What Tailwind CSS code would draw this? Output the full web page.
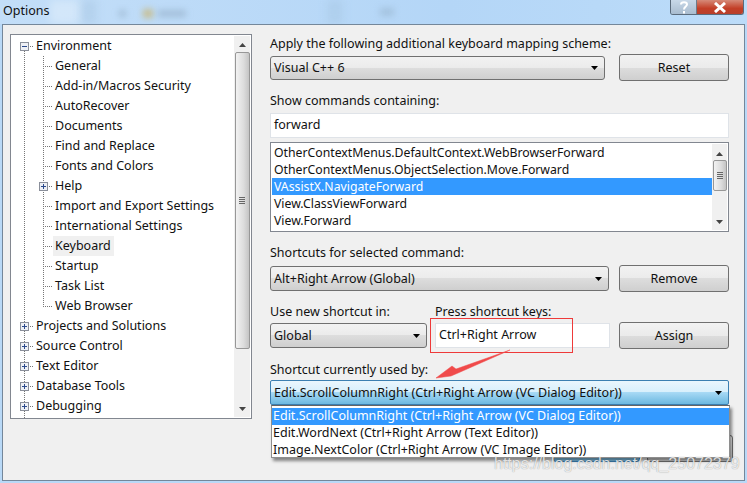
<!DOCTYPE html>
<html lang="en">
<head>
    <meta charset="UTF-8">
    <title>Options</title>
    <script src="https://cdn.jsdelivr.net/npm/@tailwindcss/browser@4"></script>
</head>
<body class="bg-[#b9d9f7]">
<div class="relative w-[747px] h-[483px] overflow-hidden font-['Noto_Sans','Liberation_Sans',sans-serif] text-[12.5px] leading-[17px] text-[#111]">

    <!-- title bar -->
    <div class="relative flex h-6 bg-[linear-gradient(90deg,#c3def8,#b4d6f7_60%,#bcdcf9)]">
        <!-- blurred window behind the glass -->
        <div class="absolute left-[50px] top-0 h-6 w-[30px] bg-white/30 blur-[4px]"></div>
        <div class="absolute left-[82px] top-0 h-6 w-[14px] bg-[#9fc0dc]/40 blur-[4px]"></div>
        <div class="absolute left-[119px] top-[10px] h-[7px] w-[7px] bg-[#8aa4bc]/50 blur-[3px]"></div>
        <div class="absolute left-[143px] top-[9px] h-[9px] w-[10px] bg-[#c9b878]/80 blur-[3px]"></div>
        <div class="absolute left-[158px] top-[10px] h-[7px] w-[28px] bg-[#8aa4bc]/50 blur-[3px]"></div>
        <div class="absolute left-[328px] top-0 h-6 w-[14px] bg-[#9fc0dc]/40 blur-[4px]"></div>
        <div class="absolute left-[380px] top-[8px] h-[8px] w-[14px] bg-[#8aa4bc]/40 blur-[3px]"></div>

        <span class="relative pl-[3px] pt-px leading-[19px]">Options</span>
        <div class="relative ml-auto mr-[3px] flex h-[15px] rounded-b-[3px] border border-t-0 border-[#5b6b7c] overflow-hidden">
            <div class="w-[26px] flex items-center justify-center bg-[linear-gradient(#c8d8e8,#a9bccf)] border-r border-[#6d7b8a]">
                <svg width="10" height="13" viewBox="0 0 10 13" fill="none" stroke="#fff" stroke-width="2"><path d="M2 3.500C2 0.500 8 0.500 8 3.500C8 5.500 5 5.500 5 8.500M5 10v2.500"/></svg>
            </div>
            <div class="w-[46px] flex items-center justify-center bg-[linear-gradient(#d68a78,#c33f27_60%,#b8402c)]">
                <svg width="14" height="11" viewBox="0 0 14 11" fill="none" stroke="#fff" stroke-width="3"><path d="M2 1l10 9M12 1L2 10"/></svg>
            </div>
        </div>
    </div>

    <!-- dialog panel -->
    <div class="absolute left-[2px] top-6 w-[743px] h-[457px] border border-[#74879a] bg-[#f0f0f0] flex">

        <!-- tree -->
        <div class="ml-[7px] mt-[9px] w-[242px] h-[385px] border border-[#828790] bg-white flex">
            <div id="tree" class="relative flex-1 overflow-hidden">
                <div class="absolute left-[13px] top-[15px] h-[368px] border-l border-dotted border-[#777]"></div>
                <div class="absolute left-[32px] top-[21px] h-[251px] border-l border-dotted border-[#777]"></div>
            </div>
            <!-- tree scrollbar -->
            <div class="w-[16px] my-px mr-px flex flex-col items-center bg-[#f0f0f0]">
                <svg class="mt-[7px] shrink-0" width="7" height="4"><path d="M3.500 0L7 4H0z" fill="#444"/></svg>
                <div class="mt-[5px] h-[297px] w-[15px] rounded-[2px] border border-[#979797] bg-[linear-gradient(90deg,#f2f2f2,#dcdcdc_60%,#c4c4c4)] flex flex-col items-center justify-center gap-px">
                    <div class="w-[6px] h-px bg-[#666]"></div>
                    <div class="w-[6px] h-px bg-[#666]"></div>
                    <div class="w-[6px] h-px bg-[#666]"></div>
                    <div class="w-[6px] h-px bg-[#666]"></div>
                </div>
                <svg class="mt-auto mb-[6px] shrink-0" width="7" height="4"><path d="M0 0h7L3.500 4z" fill="#444"/></svg>
            </div>
        </div>

        <!-- right column -->
        <div class="ml-[18px] w-[459px] pt-[10px] flex flex-col">
            <div>Apply the following additional keyboard mapping scheme:</div>

            <div class="mt-[2px] flex h-[27px] items-center justify-between">
                <div class="w-[335px] h-[24px] pl-[3px] pr-[6px] flex items-center justify-between rounded-[3px] border border-[#707070] bg-[linear-gradient(#f2f2f2,#ebebeb_50%,#dddddd_50%,#cfcfcf)]">
                    <span>Visual C++ 6</span>
                    <svg width="7" height="4"><path d="M0 0h7L3.500 4z" fill="#000"/></svg>
                </div>
                <div class="w-[110px] h-[27px] flex items-center justify-center rounded-[3px] border border-[#707070] bg-[linear-gradient(#f2f2f2,#ebebeb_50%,#dddddd_50%,#cfcfcf)]">Reset</div>
            </div>

            <div class="mt-[11px]">Show commands containing:</div>
            <div class="mt-[4px] h-[25px] pl-[3px] pb-[2px] flex items-center border border-[#dfe3e8] bg-white">forward</div>

            <!-- command list -->
            <div class="relative mt-[4px] h-[90px] border border-[#828790] bg-white flex text-[12.25px]">
                <div class="flex-1 pl-px pt-px">
                    <div class="h-[17px] pl-[2px]">OtherContextMenus.DefaultContext.WebBrowserForward</div>
                    <div class="h-[17px] pl-[2px]">OtherContextMenus.ObjectSelection.Move.Forward</div>
                    <div class="h-[17px] pl-[2px] bg-[#3399ff] text-white">VAssistX.NavigateForward</div>
                    <div class="h-[17px] pl-[2px]">View.ClassViewForward</div>
                    <div class="h-[17px] pl-[2px]">View.Forward</div>
                </div>
                <div class="w-[15px] mr-px my-px flex flex-col items-center bg-[#f0f0f0]">
                    <svg class="mt-[8px] shrink-0" width="7" height="4"><path d="M3.500 0L7 4H0z" fill="#444"/></svg>
                    <div class="mt-[4px] h-[31px] w-[14px] rounded-[2px] border border-[#979797] bg-[linear-gradient(90deg,#f2f2f2,#dcdcdc_60%,#c4c4c4)] flex flex-col items-center justify-center gap-px">
                        <div class="w-[6px] h-px bg-[#666]"></div>
                        <div class="w-[6px] h-px bg-[#666]"></div>
                        <div class="w-[6px] h-px bg-[#666]"></div>
                        <div class="w-[6px] h-px bg-[#666]"></div>
                    </div>
                    <svg class="mt-auto mb-[6px] shrink-0" width="7" height="4"><path d="M0 0h7L3.500 4z" fill="#444"/></svg>
                </div>
            </div>

            <div class="mt-[12px]">Shortcuts for selected command:</div>
            <div class="mt-[4px] flex h-[27px] items-center justify-between">
                <div class="w-[339px] h-[25px] pl-[3px] pr-[6px] flex items-center justify-between rounded-[3px] border border-[#707070] bg-[linear-gradient(#f2f2f2,#ebebeb_50%,#dddddd_50%,#cfcfcf)]">
                    <span>Alt+Right Arrow (Global)</span>
                    <svg width="7" height="4"><path d="M0 0h7L3.500 4z" fill="#000"/></svg>
                </div>
                <div class="w-[110px] h-[27px] flex items-center justify-center rounded-[3px] border border-[#707070] bg-[linear-gradient(#f2f2f2,#ebebeb_50%,#dddddd_50%,#cfcfcf)]">Remove</div>
            </div>

            <div class="mt-[11px] flex">
                <span class="w-[165px]">Use new shortcut in:</span>
                <span>Press shortcut keys:</span>
            </div>
            <div class="mt-[2px] flex h-[27px] items-center">
                <div class="w-[157px] h-[25px] pl-[3px] pr-[6px] flex items-center justify-between rounded-[3px] border border-[#707070] bg-[linear-gradient(#f2f2f2,#ebebeb_50%,#dddddd_50%,#cfcfcf)]">
                    <span>Global</span>
                    <svg width="7" height="4"><path d="M0 0h7L3.500 4z" fill="#000"/></svg>
                </div>
                <div class="ml-[8px] w-[175px] h-[25px] pl-[3px] pb-[2px] flex items-center border border-[#dfe3e8] bg-white">Ctrl+Right Arrow</div>
                <div class="ml-auto w-[110px] h-[27px] flex items-center justify-center rounded-[3px] border border-[#707070] bg-[linear-gradient(#f2f2f2,#ebebeb_50%,#dddddd_50%,#cfcfcf)]">Assign</div>
            </div>

            <div class="mt-[12px]">Shortcut currently used by:</div>
            <div class="mt-[2px] h-[25px] pl-[3px] pr-[6px] flex items-center justify-between rounded-[2px] border border-[#3c7fb1] bg-[linear-gradient(#eaf6fd,#d7effc_50%,#a7d9f5_50%,#6cb8e0)]">
                <span>Edit.ScrollColumnRight (Ctrl+Right Arrow (VC Dialog Editor))</span>
                <svg width="7" height="4"><path d="M0 0h7L3.500 4z" fill="#000"/></svg>
            </div>

            <!-- OK / Cancel, mostly hidden by the open dropdown -->
            <div class="mt-[25px] flex justify-end gap-[7px] -mr-[4px]">
                <div class="w-[87px] h-[32px] rounded-[3px] border border-[#3c7fb1] bg-[linear-gradient(#d7effc,#7cc0e6)]"></div>
                <div class="w-[86px] h-[27px] mt-[5px] rounded-[3px] border border-[#707070] bg-[linear-gradient(#f2f2f2,#cfcfcf)]"></div>
            </div>
        </div>
    </div>

    <!-- open dropdown -->
    <div class="absolute left-[271px] top-[405px] w-[459px] h-[53px] border border-[#8e8e8e] border-t-[#646464] bg-white pt-[2px] shadow-[2px_3px_3px_rgba(0,0,0,0.45)]">
        <div class="h-[17px] pl-px leading-[15px] bg-[#3399ff] text-white">Edit.ScrollColumnRight (Ctrl+Right Arrow (VC Dialog Editor))</div>
        <div class="h-[17px] pl-px leading-[15px]">Edit.WordNext (Ctrl+Right Arrow (Text Editor))</div>
        <div class="h-[17px] pl-px leading-[15px]">Image.NextColor (Ctrl+Right Arrow (VC Image Editor))</div>
    </div>

    <!-- annotation: red box and arrow -->
    <div class="absolute left-[430px] top-[318px] w-[143px] h-[35px] border border-[#ee3a3a]"></div>
    <svg class="absolute left-[430px] top-[345px]" width="90" height="40" viewBox="0 0 90 40">
        <path d="M80 5L26 24L22 21L6 33L21 31L28 28z" fill="#f04a4a" stroke="#f04a4a" stroke-width="0.5" stroke-linejoin="round"/>
    </svg>

    <!-- watermark -->
    <div class="absolute left-[494px] top-[453px] text-[16px] leading-[22px] text-white/80 [text-shadow:0_0_1px_rgba(0,0,0,0.45)] font-['Liberation_Sans',sans-serif]">https://blog.csdn.net/qq_25072379</div>
</div>

<script>
    const tree = document.getElementById('tree');
    // [label, indent level, expander, selected]
    const items = [
        ['Environment', 0, 'minus'],
        ['General', 1], ['Add-in/Macros Security', 1], ['AutoRecover', 1], ['Documents', 1],
        ['Find and Replace', 1], ['Fonts and Colors', 1], ['Help', 1, 'plus'],
        ['Import and Export Settings', 1], ['International Settings', 1], ['Keyboard', 1, null, true],
        ['Startup', 1], ['Task List', 1], ['Web Browser', 1],
        ['Projects and Solutions', 0, 'plus'], ['Source Control', 0, 'plus'], ['Text Editor', 0, 'plus'],
        ['Database Tools', 0, 'plus'], ['Debugging', 0, 'plus'],
    ];

    for (const [label, level, box, active] of items) {
        const row = tree.appendChild(document.createElement('div'));
        row.className = 'relative h-5';
        const x = level ? 32 : 13;
        let html = `<div class="absolute top-[11px] w-[9px] border-t border-dotted border-[#777]" style="left:${x}px"></div>`;
        if (box) {
            const bar = box === 'plus' ? '<path d="M2 4.500h5M4.500 2v5" stroke="#2b4a8c"/>' : '<path d="M2 4.500h5" stroke="#2b4a8c"/>';
            html += `<svg class="absolute top-[7px]" style="left:${x - 4}px" width="9" height="9"><rect x=".5" y=".5" width="8" height="8" fill="#eef0f5" stroke="#8a8f9a"/>${bar}</svg>`;
        }
        const cls = active ? 'bg-[#f0f0f0] w-[61px] pl-[2px]' : level ? 'pl-[2px]' : 'pl-[1px]';
        html += `<span class="absolute top-px h-5 leading-5 ${cls}" style="left:${level ? 42 : 24}px">${label}</span>`;
        row.innerHTML = html;
    }
</script>
</body>
</html>
